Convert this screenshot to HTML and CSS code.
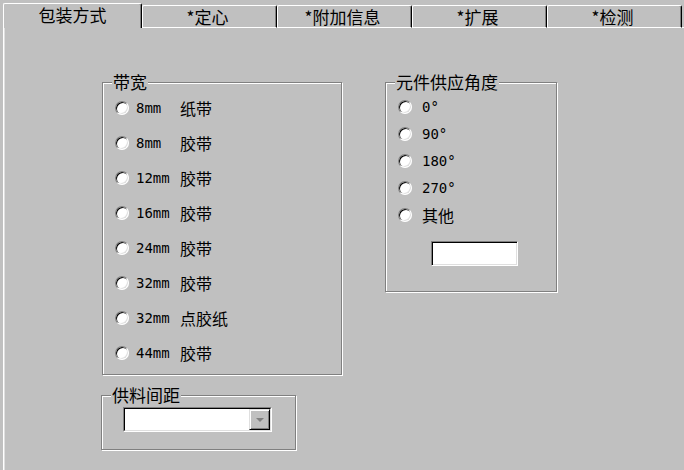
FILE: index.html
```html
<!DOCTYPE html>
<html lang="zh-CN">
<head>
<meta charset="utf-8">
<title>包装方式</title>
<link rel="stylesheet" href="styles.css">
</head>
<body>
<div class="window">
  <div class="tabs">
    <div class="tab active">包装方式</div>
    <div class="tab">*定心</div>
    <div class="tab">*附加信息</div>
    <div class="tab">*扩展</div>
    <div class="tab">*检测</div>
    <div class="tab-fill"></div>
  </div>
  <div class="panel">
    <div class="col-left">
      <fieldset class="group group-width">
        <legend>带宽</legend>
        <label class="opt"><span class="radio"></span><span class="num">8mm</span><span class="cj">纸带</span></label>
        <label class="opt"><span class="radio"></span><span class="num">8mm</span><span class="cj">胶带</span></label>
        <label class="opt"><span class="radio"></span><span class="num">12mm</span><span class="cj">胶带</span></label>
        <label class="opt"><span class="radio"></span><span class="num">16mm</span><span class="cj">胶带</span></label>
        <label class="opt"><span class="radio"></span><span class="num">24mm</span><span class="cj">胶带</span></label>
        <label class="opt"><span class="radio"></span><span class="num">32mm</span><span class="cj">胶带</span></label>
        <label class="opt"><span class="radio"></span><span class="num">32mm</span><span class="cj">点胶纸</span></label>
        <label class="opt"><span class="radio"></span><span class="num">44mm</span><span class="cj">胶带</span></label>
      </fieldset>
      <fieldset class="group group-pitch">
        <legend>供料间距</legend>
        <div class="combo">
          <div class="combo-inner">
            <div class="combo-btn"><span class="arrow"></span></div>
          </div>
        </div>
      </fieldset>
    </div>
    <fieldset class="group group-angle">
      <legend>元件供应角度</legend>
      <label class="opt"><span class="radio"></span><span class="deg">0°</span></label>
      <label class="opt"><span class="radio"></span><span class="deg">90°</span></label>
      <label class="opt"><span class="radio"></span><span class="deg">180°</span></label>
      <label class="opt"><span class="radio"></span><span class="deg">270°</span></label>
      <label class="opt"><span class="radio"></span><span class="cj">其他</span></label>
      <div class="textbox"></div>
    </fieldset>
  </div>
</div>
</body>
</html>
```
FILE: styles.css
```css
html, body {
  margin: 0;
  padding: 0;
}
body {
  background: #c0c0c0;
  color: #000;
  font-family: "Noto Sans CJK SC", "Noto Sans", sans-serif;
  overflow: hidden;
}
.window {
  height: 470px;
  display: flex;
  flex-direction: column;
}
.tabs {
  flex: none;
  display: flex;
  align-items: flex-end;
  height: 28px;
  padding-left: 3px;
}
.tab {
  box-sizing: border-box;
  width: 135px;
  height: 23px;
  border: 1px solid #fff;
  border-right-color: #000;
  border-radius: 2px 2px 0 0;
  box-shadow: inset -1px 0 0 #808080;
  display: flex;
  align-items: center;
  justify-content: center;
  font-size: 17px;
  line-height: 1;
  padding-right: 4px;
}
.tab.active {
  width: 139px;
  height: 25px;
  border-bottom: none;
  padding-bottom: 3px;
  padding-right: 0;
}
.tab-fill {
  flex: 1;
  border-bottom: 1px solid #fff;
}
.panel {
  flex: 1;
  margin-left: 3px;
  border-left: 1px solid #fff;
  box-shadow: inset 1px 0 0 #dfdfdf;
  display: flex;
  align-items: flex-start;
  padding: 46px 0 0 98px;
}
.col-left {
  display: flex;
  flex-direction: column;
  width: 240px;
}
.group {
  box-sizing: border-box;
  margin: 0;
  padding: 0 0 0 12px;
  min-inline-size: 0;
  border: 1px solid #808080;
  box-shadow: 1px 1px 0 #fff, inset 1px 1px 0 #fff;
}
.group legend {
  margin-left: -3px;
  padding: 0 1px;
  font-size: 17px;
  line-height: 16px;
  background: #c0c0c0;
}
.group-width {
  width: 240px;
  padding-bottom: 4px;
}
.opt {
  display: flex;
  align-items: center;
  height: 35px;
}
.radio {
  flex: none;
  box-sizing: border-box;
  width: 14px;
  height: 14px;
  border-radius: 50%;
  background: #fff;
  border: 1px solid;
  border-color: #808080 #fff #fff #808080;
  box-shadow: inset 1px 1px 0 #000, inset -1px -1px 0 #dfdfdf;
  margin-right: 7px;
}
.num, .deg {
  font-family: "DejaVu Sans Mono", "Liberation Mono", monospace;
  font-size: 14px;
}
.num {
  width: 44px;
}
.cj {
  font-size: 16px;
  line-height: 1;
}
.group-pitch {
  width: 195px;
  margin-top: 12px;
  margin-left: -1px;
  padding-top: 4px;
  padding-bottom: 17px;
}
.combo {
  box-sizing: border-box;
  width: 149px;
  height: 25px;
  margin-left: 9px;
  border: 1px solid;
  border-color: #808080 #fff #fff #808080;
}
.combo-inner {
  box-sizing: border-box;
  height: 100%;
  display: flex;
  justify-content: flex-end;
  background: #fff;
  border: 1px solid;
  border-color: #000 #dfdfdf #dfdfdf #000;
}
.combo-btn {
  box-sizing: border-box;
  width: 21px;
  height: 100%;
  background: #c0c0c0;
  border: 1px solid;
  border-color: #dfdfdf #000 #000 #dfdfdf;
  box-shadow: inset 1px 1px 0 #fff, inset -1px -1px 0 #808080;
  display: flex;
  align-items: center;
  justify-content: center;
}
.arrow {
  width: 0;
  height: 0;
  border-left: 4px solid transparent;
  border-right: 4px solid transparent;
  border-top: 4px solid #808080;
}
.group-angle {
  width: 172px;
  margin-left: 43px;
  padding-top: 3px;
  padding-bottom: 25px;
}
.group-angle .opt {
  height: 27px;
}
.group-angle .radio {
  margin-right: 10px;
}
.textbox {
  box-sizing: border-box;
  width: 87px;
  height: 25px;
  margin: 13px 0 0 33px;
  background: #fff;
  border: 1px solid;
  border-color: #808080 #fff #fff #808080;
  box-shadow: inset 1px 1px 0 #000, inset -1px -1px 0 #dfdfdf;
}
```
